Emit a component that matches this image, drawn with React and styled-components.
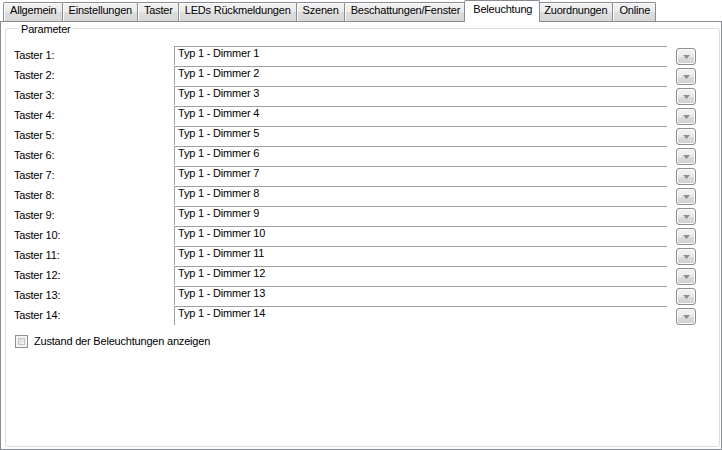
import React from "react";
import styled, { createGlobalStyle } from "styled-components";

const GlobalStyle = createGlobalStyle`
  html, body {
    margin: 0;
    padding: 0;
    background: #ffffff;
  }
  body {
    font-family: "Liberation Sans", Arial, sans-serif;
    font-size: 11px;
    color: #000000;
  }
`;

const TABS = [
  "Allgemein",
  "Einstellungen",
  "Taster",
  "LEDs Rückmeldungen",
  "Szenen",
  "Beschattungen/Fenster",
  "Beleuchtung",
  "Zuordnungen",
  "Online",
];

const ACTIVE_TAB = "Beleuchtung";

const buttons = Array.from({ length: 14 }, (_, i) => ({
  label: `Taster ${i + 1}:`,
  value: `Typ 1 - Dimmer ${i + 1}`,
}));

export default function App() {
  return (
    <>
      <GlobalStyle />
      <Window>
        <TabBar>
          {TABS.map((t) => (
            <Tab key={t} $active={t === ACTIVE_TAB}>
              {t}
            </Tab>
          ))}
        </TabBar>
        <Panel>
          <GroupBox>
            <Legend>Parameter</Legend>
            {buttons.map((b) => (
              <Row key={b.label}>
                <Label>{b.label}</Label>
                <Field>{b.value}</Field>
                <DropButton>
                  <svg width="7" height="4" viewBox="0 0 7 4">
                    <polygon points="0,0 7,0 3.5,4" fill="#8c8c8c" />
                  </svg>
                </DropButton>
              </Row>
            ))}
            <CheckRow>
              <CheckBox>
                <span />
              </CheckBox>
              <span>Zustand der Beleuchtungen anzeigen</span>
            </CheckRow>
          </GroupBox>
        </Panel>
      </Window>
    </>
  );
}

const Window = styled.div`
  width: 722px;
  height: 450px;
  display: flex;
  flex-direction: column;
  background: #ffffff;
  letter-spacing: -0.2px;
  overflow: hidden;
`;

const TabBar = styled.div`
  height: 21px;
  flex: 0 0 21px;
  display: flex;
  align-items: flex-end;
  padding-left: 3px;
  position: relative;
  z-index: 1;
`;

const Tab = styled.div`
  box-sizing: border-box;
  height: ${(p) => (p.$active ? "22px" : "19px")};
  margin: 0 ${(p) => (p.$active ? "-2px" : "0")} ${(p) => (p.$active ? "-1px" : "0")};
  margin-left: ${(p) => (p.$active ? "-2px" : "-1px")};
  padding: ${(p) => (p.$active ? "2px 7px 0 8px" : "1px 5px 0 6px")};
  line-height: 13px;
  white-space: nowrap;
  border: 1px solid #898c95;
  border-bottom: none;
  border-radius: 2px 2px 0 0;
  background: ${(p) =>
    p.$active
      ? "#ffffff"
      : "linear-gradient(#f2f2f2, #ebebeb 50%, #dddddd 51%, #d6d6d6)"};
  box-shadow: ${(p) => (p.$active ? "none" : "inset 1px 1px 0 #fbfbfb")};
  position: relative;
  z-index: ${(p) => (p.$active ? 2 : 0)};

  &:first-child {
    margin-left: 0;
  }
`;

const Panel = styled.div`
  flex: 1;
  display: flex;
  border: 1px solid #898c95;
  background: #ffffff;
  padding: 0 1px 2px 4px;
  min-height: 0;
`;

const GroupBox = styled.fieldset`
  flex: 1;
  margin: 0;
  min-width: 0;
  border: 1px solid #d5dfe5;
  border-radius: 3px;
  padding: 11px 0 0 8px;
`;

const Legend = styled.legend`
  margin-left: 5px;
  padding: 0 2px;
  line-height: 13px;
  position: relative;
  top: 1px;
`;

const Row = styled.div`
  display: flex;
  height: 20px;
`;

const Label = styled.div`
  flex: 0 0 160px;
  line-height: 18px;
  white-space: nowrap;
`;

const Field = styled.div`
  box-sizing: border-box;
  flex: 0 0 493px;
  height: 19px;
  border-top: 1px solid #a0a0a0;
  border-left: 1px solid #a0a0a0;
  padding-left: 3px;
  line-height: 13px;
  white-space: nowrap;
`;

const DropButton = styled.div`
  box-sizing: border-box;
  margin: 2px 0 0 9px;
  width: 20px;
  height: 17px;
  border: 1px solid #8e8f8f;
  border-radius: 3px;
  background: linear-gradient(#f2f2f2, #ebebeb 50%, #dddddd 51%, #cfcfcf);
  box-shadow: inset 0 0 0 1px #fafafa;
  display: flex;
  align-items: center;
  justify-content: center;
  padding-top: 1px;
`;

const CheckRow = styled.div`
  display: flex;
  align-items: center;
  gap: 6px;
  margin-top: 9px;
  padding-left: 1px;
  line-height: 13px;
`;

const CheckBox = styled.div`
  box-sizing: border-box;
  width: 13px;
  height: 13px;
  border: 1px solid #8e8f8f;
  background: #f4f4f4;
  padding: 2px;
  display: flex;

  span {
    flex: 1;
    border: 1px solid #c4c4c4;
    background: linear-gradient(135deg, #d6d6d6, #f6f6f6);
  }
`;
